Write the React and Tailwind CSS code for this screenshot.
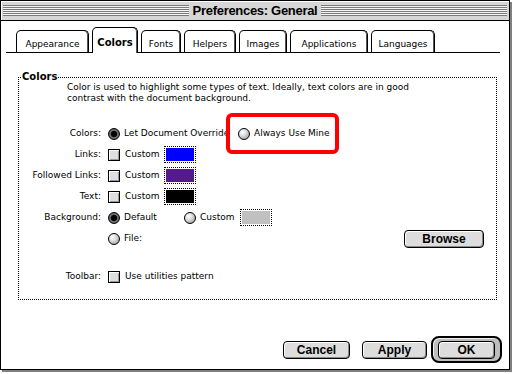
import React from 'react';

const stripes = 'h-[11px] flex-1 bg-[repeating-linear-gradient(to_bottom,#7a7a7a_0px,#7a7a7a_1px,#f4f4f4_1px,#f4f4f4_2px)]';

function Radio({ on }) {
  if (on) {
    return (
      <span className="inline-block w-[12px] h-[12px] shrink-0 rounded-full border border-black bg-[radial-gradient(circle_at_50%_50%,#000_0%,#000_38%,#777_52%,#3a3a3a_100%)]" />
    );
  }
  return (
    <span className="inline-block w-[12px] h-[12px] shrink-0 rounded-full border border-black bg-[radial-gradient(circle_at_35%_32%,#fff_0%,#e2e2e2_35%,#8a8a8a_100%)]" />
  );
}

function Check() {
  return (
    <span className="inline-block w-[12px] h-[12px] shrink-0 border border-black bg-[#dedede] shadow-[inset_1px_1px_0_#fff,inset_-1px_-1px_0_#9a9a9a]" />
  );
}

function Swatch({ color }) {
  return (
    <span className="inline-block w-[32px] h-[17px] border border-dotted border-black p-[1px]">
      <span className="block w-full h-full" style={{ background: color }} />
    </span>
  );
}

function Button({ children, className }) {
  return (
    <div
      className={
        'flex items-center justify-center h-[18px] rounded-[4px] border border-black bg-[#dddddd] shadow-[inset_1px_1px_0_#fff,inset_-1px_-1px_0_#8a8a8a] font-["Liberation_Sans",sans-serif] font-bold text-[12px] leading-none ' +
        className
      }
    >
      {children}
    </div>
  );
}

const tabs = [
  { label: 'Appearance', w: 'w-[73px]' },
  { label: 'Colors', w: 'w-[46px]', active: true },
  { label: 'Fonts', w: 'w-[40px]' },
  { label: 'Helpers', w: 'w-[52px]' },
  { label: 'Images', w: 'w-[48px]' },
  { label: 'Applications', w: 'w-[78px]' },
  { label: 'Languages', w: 'w-[64px]' },
];

function Row({ label, children }) {
  return (
    <div className="flex items-center h-[21px]">
      <div className="w-[83px] text-right pr-[1px]">{label}</div>
      <div className="flex items-center flex-1 pl-[6px]">{children}</div>
    </div>
  );
}

export default function App() {
  return (
    <div className="w-[513px] h-[374px] bg-white overflow-hidden text-black font-['DejaVu_Sans',sans-serif] text-[9px] leading-[11px]">
      <div className="w-[510px] h-[370px] border border-black shadow-[2px_2px_0_#7f7f7f] flex flex-col bg-white">
        {/* title bar */}
        <div className="h-[20px] shrink-0 flex items-center gap-[4px] px-[2px] bg-[#d6d6d6] border-b border-black shadow-[inset_1px_1px_0_#fff]">
          <div className={stripes} />
          <div className="font-['Liberation_Sans',sans-serif] font-bold text-[13px] tracking-[-0.3px] leading-none">
            Preferences: General
          </div>
          <div className={stripes} />
        </div>

        {/* tabs */}
        <div className="mt-[6px] ml-[5px] w-[494px] flex items-end gap-[3px] pl-[10px] border-b border-black">
          {tabs.map((t) =>
            t.active ? (
              <div
                key={t.label}
                className={t.w + ' h-[26px] -mb-[1px] relative z-10 bg-white border border-b-0 border-black rounded-t-[5px] shadow-[inset_-1px_0_0_#555] flex items-end justify-center pb-[5px] font-bold text-[10px]'}
              >
                {t.label}
              </div>
            ) : (
              <div
                key={t.label}
                className={t.w + ' h-[22px] bg-white border border-b-0 border-black rounded-t-[5px] shadow-[inset_-1px_0_0_#555] flex items-end justify-center pb-[2px]'}
              >
                {t.label}
              </div>
            )
          )}
        </div>

        {/* group box */}
        <div className="relative mt-[24px] ml-[17px] w-[479px] h-[223px] border border-dotted border-black">
          <span className="absolute -top-[7px] left-[2px] bg-white px-[1px] font-bold text-[10px] leading-[12px]">
            Colors
          </span>
          <div className="pl-[48px] pt-[4px]">
            <div>Color is used to highlight some types of text. Ideally, text colors are in good</div>
            <div>contrast with the document background.</div>
          </div>

          <div className="mt-[19px] flex flex-col">
            <Row label="Colors:">
              <div className="w-[130px] flex items-center gap-[4px]">
                <Radio on />
                <span>Let Document Override</span>
              </div>
              <div className="relative flex items-center gap-[4px]">
                <span className="absolute -left-[12px] -right-[9px] -top-[15px] -bottom-[14px] border-[4px] border-[#ff0000] rounded-[6px]" />
                <Radio />
                <span>Always Use Mine</span>
              </div>
            </Row>
            <Row label="Links:">
              <div className="w-[56px] flex items-center gap-[5px]">
                <Check />
                <span>Custom</span>
              </div>
              <Swatch color="#0000ff" />
            </Row>
            <Row label="Followed Links:">
              <div className="w-[56px] flex items-center gap-[5px]">
                <Check />
                <span>Custom</span>
              </div>
              <Swatch color="#551a8b" />
            </Row>
            <Row label="Text:">
              <div className="w-[56px] flex items-center gap-[5px]">
                <Check />
                <span>Custom</span>
              </div>
              <Swatch color="#000000" />
            </Row>
            <Row label="Background:">
              <div className="w-[76px] flex items-center gap-[4px]">
                <Radio on />
                <span>Default</span>
              </div>
              <div className="w-[56px] flex items-center gap-[4px]">
                <Radio />
                <span>Custom</span>
              </div>
              <Swatch color="#c0c0c0" />
            </Row>
            <Row label="">
              <div className="flex items-center gap-[4px]">
                <Radio />
                <span>File:</span>
              </div>
              <Button className="ml-auto mr-[12px] w-[80px] h-[17px]">Browse</Button>
            </Row>
            <div className="mt-[17px]">
              <Row label="Toolbar:">
                <div className="flex items-center gap-[5px]">
                  <Check />
                  <span>Use utilities pattern</span>
                </div>
              </Row>
            </div>
          </div>
        </div>

        {/* buttons */}
        <div className="mt-[36px] flex items-center justify-end pr-[7px]">
          <Button className="w-[67px]">Cancel</Button>
          <Button className="w-[65px] ml-[12px]">Apply</Button>
          <div className="ml-[4px] w-[71px] h-[27px] rounded-[8px] border-[2px] border-black bg-[#bdbdbd] shadow-[inset_1px_1px_0_#eee] flex items-center justify-center">
            <Button className="w-[57px]">OK</Button>
          </div>
        </div>
      </div>
    </div>
  );
}
